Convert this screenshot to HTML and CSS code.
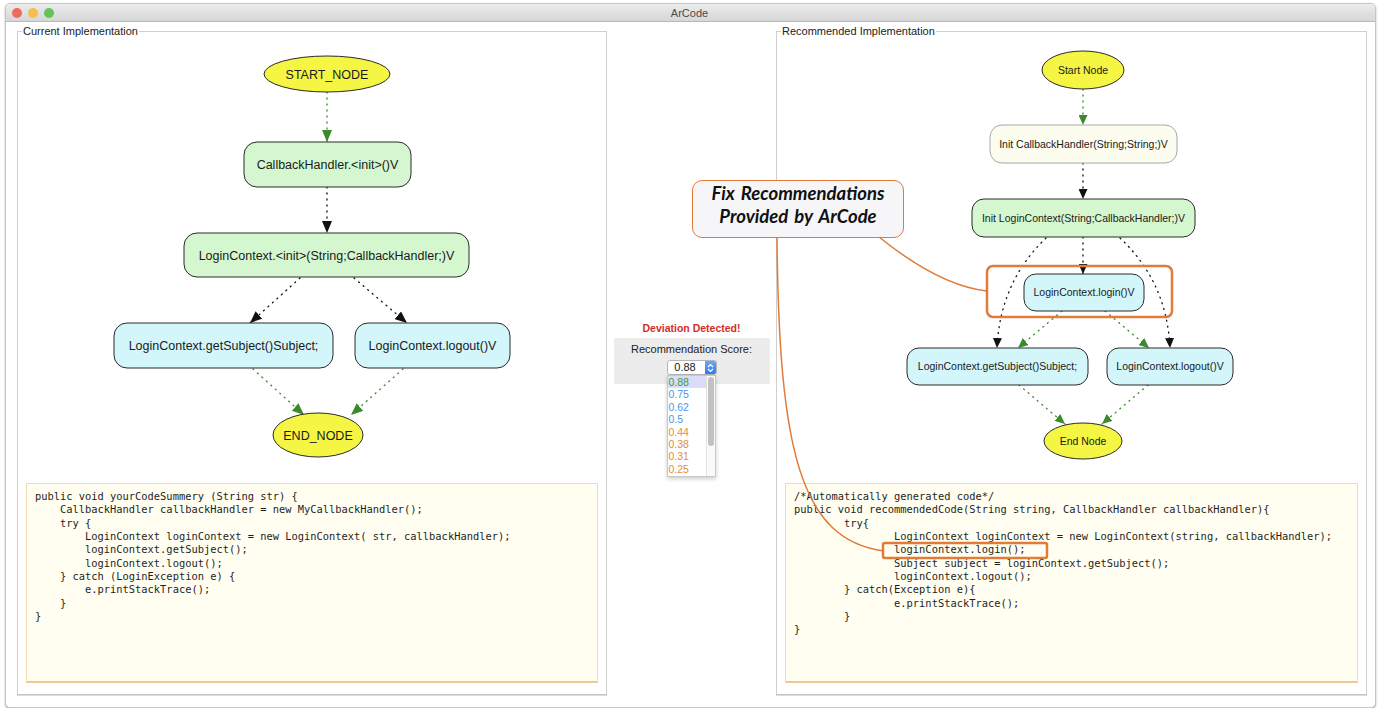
FILE: index.html
```html
<!DOCTYPE html>
<html lang="en">
<head>
  <meta charset="UTF-8">
  <title>ArCode</title>
  <link rel="stylesheet" href="styles.css">
</head>
<body>
  <div class="window">
    <div class="titlebar">
      <div class="lights">
        <span class="light red"></span>
        <span class="light yellow"></span>
        <span class="light green"></span>
      </div>
      <div class="title">ArCode</div>
    </div>

    <div class="main">
      <!-- Left: what the developer wrote -->
      <fieldset class="panel panel-left">
        <legend>Current Implementation</legend>
        <svg class="graph" width="572" height="438" viewBox="26 37 572 438">
          <defs>
            <marker id="arrowB" markerUnits="userSpaceOnUse" markerWidth="12" markerHeight="10" refX="12" refY="5" orient="auto">
              <path d="M0,0 L12,5 L0,10 z" fill="#111"/>
            </marker>
            <marker id="arrowG" markerUnits="userSpaceOnUse" markerWidth="12" markerHeight="10" refX="12" refY="5" orient="auto">
              <path d="M0,0 L12,5 L0,10 z" fill="#3b8a2b"/>
            </marker>
          </defs>

          <path class="edge green" d="M327,92 L327,142" marker-end="url(#arrowG)"/>
          <path class="edge black" d="M327,187 L327,233" marker-end="url(#arrowB)"/>
          <path class="edge black" d="M300,278 L250,323" marker-end="url(#arrowB)"/>
          <path class="edge black" d="M354,278 L407,323" marker-end="url(#arrowB)"/>
          <path class="edge green" d="M253,369 L304,415" marker-end="url(#arrowG)"/>
          <path class="edge green" d="M403,369 L351,415" marker-end="url(#arrowG)"/>

          <ellipse class="node yellow" cx="327" cy="74" rx="63" ry="18"/>
          <text class="label" x="327" y="78.5">START_NODE</text>

          <rect class="node green" x="244" y="142" width="167" height="45" rx="13"/>
          <text class="label" x="327.5" y="169">CallbackHandler.&lt;init&gt;()V</text>

          <rect class="node green" x="184" y="233" width="285" height="44" rx="13"/>
          <text class="label" x="326.5" y="259.5">LoginContext.&lt;init&gt;(String;CallbackHandler;)V</text>

          <rect class="node cyan" x="114" y="323" width="219" height="45" rx="13"/>
          <text class="label" x="223.5" y="350">LoginContext.getSubject()Subject;</text>

          <rect class="node cyan" x="355" y="323" width="155" height="45" rx="13"/>
          <text class="label" x="432.5" y="350">LoginContext.logout()V</text>

          <ellipse class="node yellow" cx="318" cy="435" rx="45" ry="22"/>
          <text class="label" x="318" y="439.5">END_NODE</text>
        </svg>
<pre class="code">public void yourCodeSummery (String str) {
    CallbackHandler callbackHandler = new MyCallbackHandler();
    try {
        LoginContext loginContext = new LoginContext( str, callbackHandler);
        loginContext.getSubject();
        loginContext.logout();
    } catch (LoginException e) {
        e.printStackTrace();
    }
}</pre>
      </fieldset>

      <!-- Middle: deviation + score picker -->
      <div class="middle">
        <div class="deviation">Deviation Detected!</div>
        <div class="score-box">
          <div class="score-label">Recommendation Score:</div>
          <div class="select">
            <span class="select-value">0.88</span>
            <span class="stepper">
              <svg width="7" height="10" viewBox="0 0 7 10"><path d="M1,4 L3.5,1.5 L6,4 M1,6 L3.5,8.5 L6,6" fill="none" stroke="#fff" stroke-width="1.2"/></svg>
            </span>
            <div class="dropdown">
              <ul class="options">
                <li class="opt good selected">0.88</li>
                <li class="opt mid">0.75</li>
                <li class="opt mid">0.62</li>
                <li class="opt mid">0.5</li>
                <li class="opt low">0.44</li>
                <li class="opt low">0.38</li>
                <li class="opt low">0.31</li>
                <li class="opt low">0.25</li>
              </ul>
              <div class="scroll-track"><div class="scroll-thumb"></div></div>
            </div>
          </div>
        </div>
      </div>

      <!-- Right: recommended usage -->
      <fieldset class="panel panel-right">
        <legend>Recommended Implementation</legend>
        <svg class="graph" width="573" height="438" viewBox="785 37 573 438">
          <defs>
            <marker id="arrowBs" markerUnits="userSpaceOnUse" markerWidth="10" markerHeight="9" refX="10" refY="4.5" orient="auto">
              <path d="M0,0 L10,4.5 L0,9 z" fill="#111"/>
            </marker>
            <marker id="arrowGs" markerUnits="userSpaceOnUse" markerWidth="10" markerHeight="9" refX="10" refY="4.5" orient="auto">
              <path d="M0,0 L10,4.5 L0,9 z" fill="#3b8a2b"/>
            </marker>
          </defs>

          <path class="edge green" d="M1083,89 L1083,125" marker-end="url(#arrowGs)"/>
          <path class="edge black" d="M1083,163 L1083,199" marker-end="url(#arrowBs)"/>
          <path class="edge black" d="M1083,237 L1083,274" marker-end="url(#arrowBs)"/>
          <path class="edge black" d="M1046,238 Q1000,282 997,348" marker-end="url(#arrowBs)"/>
          <path class="edge black" d="M1120,238 Q1167,282 1170,348" marker-end="url(#arrowBs)"/>
          <path class="edge green" d="M1062,311 L1018,348" marker-end="url(#arrowGs)"/>
          <path class="edge green" d="M1105,311 L1149,348" marker-end="url(#arrowGs)"/>
          <path class="edge green" d="M1019,385 L1065,424" marker-end="url(#arrowGs)"/>
          <path class="edge green" d="M1148,385 L1102,424" marker-end="url(#arrowGs)"/>

          <ellipse class="node yellow" cx="1083" cy="70" rx="41" ry="19"/>
          <text class="label small" x="1083" y="73.5">Start Node</text>

          <rect class="node cream" x="990" y="125" width="187" height="38" rx="12"/>
          <text class="label small" x="1083.5" y="147.5">Init CallbackHandler(String;String;)V</text>

          <rect class="node green" x="972" y="199" width="223" height="38" rx="12"/>
          <text class="label small" x="1083.5" y="221.5">Init LoginContext(String;CallbackHandler;)V</text>

          <rect class="node cyan" x="1024" y="274" width="120" height="37" rx="12"/>
          <text class="label small" x="1084" y="296">LoginContext.login()V</text>

          <rect class="node cyan" x="907" y="348" width="181" height="37" rx="12"/>
          <text class="label small" x="997.5" y="370">LoginContext.getSubject()Subject;</text>

          <rect class="node cyan" x="1107" y="348" width="126" height="37" rx="12"/>
          <text class="label small" x="1170" y="370">LoginContext.logout()V</text>

          <ellipse class="node yellow" cx="1083" cy="441" rx="39" ry="18"/>
          <text class="label small" x="1083" y="444.5">End Node</text>

          <rect class="mark" x="987" y="266" width="185" height="51" rx="6"/>
        </svg>
<pre class="code">/*Automatically generated code*/
public void recommendedCode(String string, CallbackHandler callbackHandler){
        try{
                LoginContext loginContext = new LoginContext(string, callbackHandler);
                loginContext.login();
                Subject subject = loginContext.getSubject();
                loginContext.logout();
        } catch(Exception e){
                e.printStackTrace();
        }
}</pre>
      </fieldset>
    </div>
  </div>

  <!-- annotation drawn over the window -->
  <svg class="annotations" width="1380" height="714" viewBox="0 0 1380 714">
    <path class="connector" d="M879,237 Q940,286 987,291"/>
    <path class="connector" d="M777,238 C779,450 800,540 884,551"/>
    <rect class="mark" x="883" y="543" width="164" height="15" rx="2"/>
  </svg>
  <div class="callout">Fix Recommendations<br>Provided by ArCode</div>
</body>
</html>
```

FILE: styles.css
```css
/* Reset */
body, ul, pre {
  margin: 0;
  padding: 0;
}

body {
  background: #ffffff;
  font-family: 'Liberation Sans', Arial, sans-serif;
  color: #222;
}

/* Window frame */
.window {
  margin: 3px 0 0 5px;
  width: 1371px;
  box-sizing: border-box;
  border: 1px solid #c6c6c6;
  border-radius: 5px;
  background: #fff;
  box-shadow: 0 1px 2px rgba(0, 0, 0, 0.35);
  overflow: hidden;
}

.titlebar {
  height: 17px;
  display: flex;
  align-items: center;
  background: linear-gradient(#ececec, #d6d6d6);
  border-bottom: 1px solid #b9b9b9;
}

.lights {
  display: flex;
  gap: 6px;
  padding-left: 6px;
}

.light {
  width: 10px;
  height: 10px;
  border-radius: 50%;
}

.light.red { background: #ec6a5e; }
.light.yellow { background: #f4bf4f; }
.light.green { background: #61c554; }

.title {
  flex: 1;
  text-align: center;
  font-size: 11px;
  color: #4a4a4a;
  margin-right: 50px;
}

/* Three columns */
.main {
  display: flex;
  padding: 3px 8px 12px 11px;
}

.panel {
  margin: 0;
  padding: 0 8px 11px;
  border: 1px solid #cfcfcf;
  border-bottom: 1px solid #c4c4c4;
  box-shadow: 0 1px 0 #dcdcdc;
  min-width: 0;
  box-sizing: border-box;
}

.panel-left { width: 590px; }
.panel-right { width: 591px; }

.panel legend {
  padding: 0 1px;
  margin-left: -4px;
  font-size: 11px;
  line-height: 12px;
  color: #222;
}

.graph {
  display: block;
}

/* Graph nodes */
.node {
  stroke: #2a2a2a;
  stroke-width: 1;
}

.node.yellow { fill: #f5f543; }
.node.green { fill: #d5f7cf; }
.node.cyan { fill: #d3f6fa; }
.node.cream { fill: #fcfcef; stroke: #a8a8a8; }

.label {
  font-family: 'Liberation Sans', Arial, sans-serif;
  font-size: 12.5px;
  fill: #1a1a1a;
  text-anchor: middle;
}

.label.small {
  font-size: 10.5px;
}

.edge {
  fill: none;
  stroke-width: 1.3;
  stroke-dasharray: 1 5;
  stroke-linecap: round;
}

.edge.black { stroke: #111; }
.edge.green { stroke: #3b8a2b; }

.mark {
  fill: none;
  stroke: #e07b39;
  stroke-width: 2.5;
}

/* Code boxes */
.code {
  margin-top: 8px;
  height: 200px;
  box-sizing: border-box;
  padding: 6px 8px;
  background: #fffef1;
  border: 1px solid #f3dab3;
  border-bottom: 2px solid #efc895;
  font-family: 'DejaVu Sans Mono', 'Liberation Mono', monospace;
  font-size: 10.4px;
  line-height: 13.35px;
  color: #1e1e1e;
  overflow: hidden;
}

/* Middle column */
.middle {
  flex: 1;
  padding-top: 297px;
}

.deviation {
  text-align: center;
  font-size: 10.5px;
  line-height: 12px;
  font-weight: bold;
  color: #d32f27;
}

.score-box {
  width: 156px;
  margin: 4px auto 0;
  padding: 5px 0 9px;
  background: #ececec;
}

.score-label {
  text-align: center;
  font-size: 11px;
  line-height: 12px;
  color: #222;
}

.select {
  position: relative;
  width: 50px;
  height: 15px;
  margin: 5px auto 0;
  display: flex;
  box-sizing: border-box;
  border: 1px solid #b5b5b5;
  border-radius: 3px;
  background: #fff;
}

.select-value {
  flex: 1;
  text-align: center;
  font-size: 11px;
  line-height: 13px;
  padding-right: 2px;
}

.stepper {
  width: 11px;
  display: flex;
  align-items: center;
  justify-content: center;
  background: linear-gradient(#6aa8f7, #2f7ae8);
  border-radius: 0 2px 2px 0;
}

/* Popup list of scores */
.dropdown {
  position: absolute;
  top: 14px;
  left: -1px;
  width: 49px;
  height: 102px;
  display: flex;
  background: #fff;
  border: 1px solid #c8c8c8;
  box-sizing: border-box;
  box-shadow: 0 2px 4px rgba(0, 0, 0, 0.2);
}

.options {
  list-style: none;
  flex: 1;
}

.opt {
  font-size: 10.5px;
  line-height: 12.4px;
  padding-left: 1px;
}

.opt.selected { background: #dcdcf6; }
.opt.good { color: #3f9a3a; }
.opt.mid { color: #4d96e6; }
.opt.low { color: #e58d2e; }

.scroll-track {
  width: 9px;
  border-left: 1px solid #e2e2e2;
  background: #fafafa;
  padding: 1px 1px 0;
  box-sizing: border-box;
}

.scroll-thumb {
  height: 69px;
  border-radius: 3px;
  background: #c2c2c2;
}

/* Annotation overlay */
.annotations {
  position: absolute;
  top: 0;
  left: 0;
  pointer-events: none;
}

.connector {
  fill: none;
  stroke: #e07b39;
  stroke-width: 1.5;
}

.callout {
  position: absolute;
  left: 692px;
  top: 180px;
  width: 212px;
  height: 58px;
  box-sizing: border-box;
  padding-top: 1px;
  border: 1.5px solid #e07b39;
  border-radius: 10px;
  background: #f6f6f8;
  text-align: center;
  font-family: Lato, 'Open Sans', sans-serif;
  font-size: 18.5px;
  line-height: 23px;
  font-weight: bold;
  font-style: italic;
  word-spacing: 2px;
  color: #111;
}
```
